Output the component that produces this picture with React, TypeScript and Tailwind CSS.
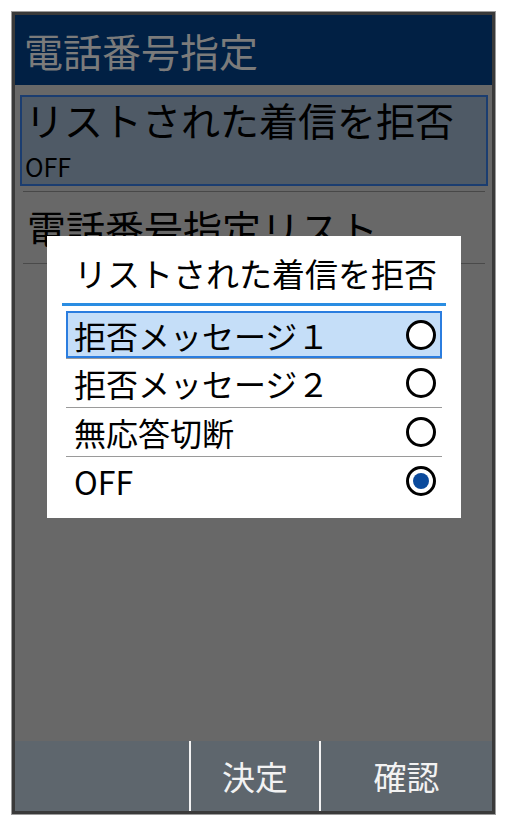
import React from 'react'

const FONT = "font-['Noto_Sans_CJK_JP','Noto_Sans',sans-serif]"

const OPTIONS = [
  { label: '拒否メッセージ１', checked: false },
  { label: '拒否メッセージ２', checked: false },
  { label: '無応答切断', checked: false },
  { label: 'OFF', checked: true },
]

function Radio({ checked }: { checked: boolean }) {
  return (
    <div className="w-[30px] h-[30px] rounded-full border-[3px] border-black flex items-center justify-center bg-white">
      {checked && <div className="w-[16px] h-[16px] rounded-full bg-[#0b4a9c]" />}
    </div>
  )
}

export default function App() {
  return (
    <div className={`w-[507px] h-[826px] bg-white pt-[11px] pl-[11px] ${FONT}`}>
      {/* device frame */}
      <div className="w-[485px] h-[804px] border border-[#9c9c9c]">
        <div className="relative w-full h-full border-[3px] border-[#3a3a3a] bg-[#686868] flex flex-col">
          {/* header */}
          <div className="h-[70px] bg-[#012044] flex items-center pl-[9px]">
            <span className="text-[39px] leading-[40px] text-[#7b7b7b]">電話番号指定</span>
          </div>

          {/* list */}
          <div className="flex-1 pt-[10px] pl-[5px] pr-[4px]">
            <div className="border-2 border-[#1b3d70] bg-[#4f5a66] pl-[3px] pt-[2px] pb-[3px]">
              <p className="text-[39px] leading-[40px] text-black">リストされた着信を拒否</p>
              <p className="text-[25px] leading-[30px] text-black mt-[12px]">OFF</p>
            </div>
            <div className="mx-[3px] mt-[5px] h-px bg-[#484848]" />
            <div className="pl-[7px] pt-[15px] pb-[16px]">
              <p className="text-[39px] leading-[40px] text-black">電話番号指定リスト</p>
            </div>
            <div className="mx-[3px] h-px bg-[#4a4a4a]" />
          </div>

          {/* soft keys */}
          <div className="h-[70px] bg-[#5e666d] flex">
            <div className="w-[174px]" />
            <div className="w-[2px] bg-[#f2f2f2]" />
            <div className="w-[128px] flex items-center justify-center">
              <span className="text-[33px] leading-[36px] text-[#f2f2f2]">決定</span>
            </div>
            <div className="w-[2px] bg-[#f2f2f2]" />
            <div className="flex-1 flex items-center justify-center">
              <span className="text-[33px] leading-[36px] text-[#f2f2f2]">確認</span>
            </div>
          </div>

          {/* dialog */}
          <div className="absolute left-[32px] top-[221px] w-[414px] h-[282px] bg-white">
            <div className="h-[67px] pl-[27px] flex items-center pt-[6px]">
              <span className="text-[33px] leading-[36px] text-black">リストされた着信を拒否</span>
            </div>
            <div className="ml-[15px] w-[384px] h-[3px] bg-[#2a8de2]" />
            <div className="ml-[19px] w-[376px] mt-[5px]">
              {OPTIONS.map((o, i) => (
                <div key={o.label}>
                  {i === 0 ? (
                    <div className="h-[47px] border-2 border-[#2b7ddf] bg-[#c5def8] flex items-center pl-[6px] pr-[4px] justify-between">
                      <span className="text-[32px] leading-[36px] text-black">{o.label}</span>
                      <Radio checked={o.checked} />
                    </div>
                  ) : (
                    <div className="h-[48px] flex items-center pl-[8px] pr-[6px] justify-between">
                      <span className="text-[32px] leading-[36px] text-black">{o.label}</span>
                      <Radio checked={o.checked} />
                    </div>
                  )}
                  {i < OPTIONS.length - 1 && <div className="h-px bg-[#9a9a9a]" />}
                </div>
              ))}
            </div>
          </div>
        </div>
      </div>
    </div>
  )
}
